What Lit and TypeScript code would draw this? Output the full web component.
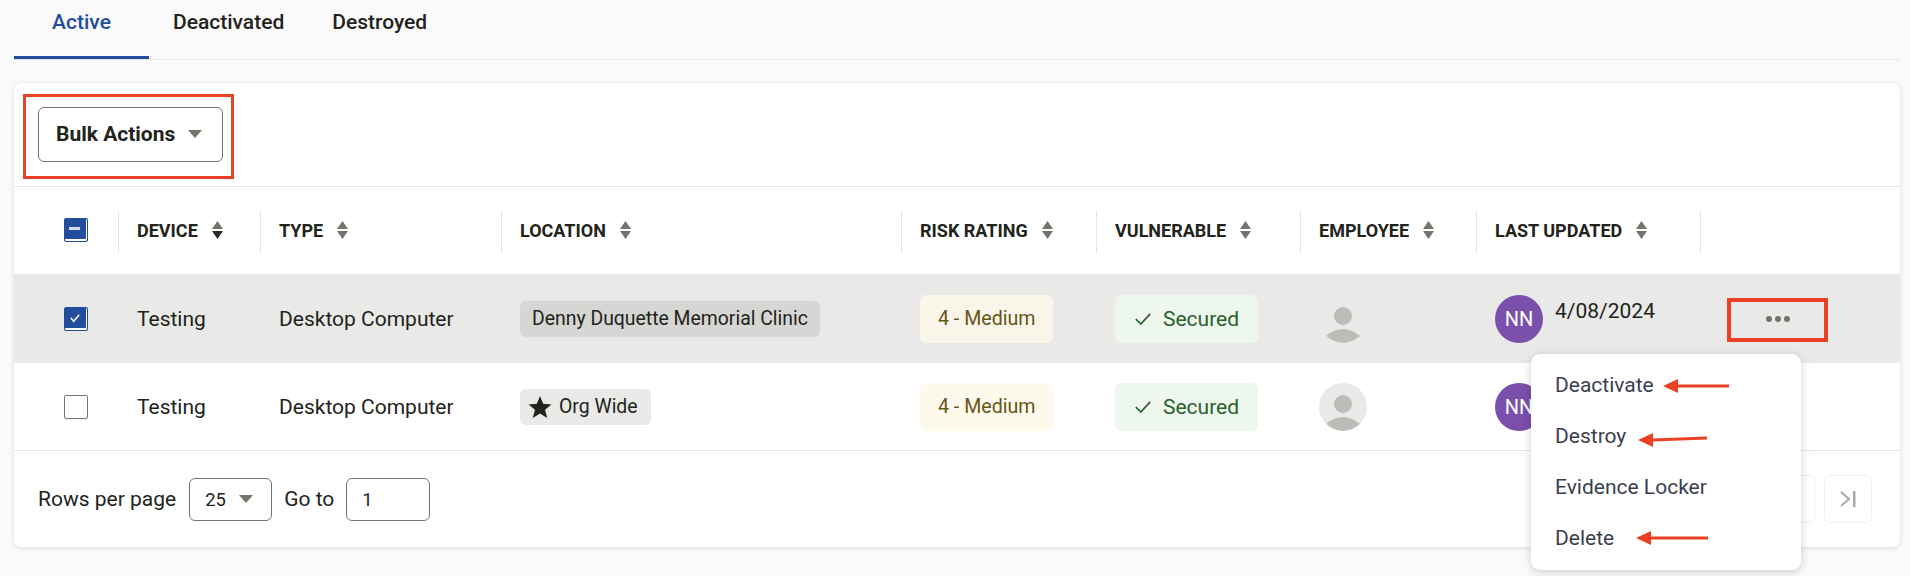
import { LitElement, html, css, svg } from "lit";
import { customElement } from "lit/decorators.js";

const sort = (down = false) => html`<svg class="sort" viewBox="0 0 11 18" width="11" height="18">
  <path d="M5.5 0 L11 8 H0Z" fill="#74746c"/>
  <path d="M5.5 18 L11 10 H0Z" fill=${down ? "#2b2b25" : "#74746c"}/></svg>`;

const caret = html`<svg class="caret" viewBox="0 0 14 8" width="14" height="8"><path d="M0 0H14L7 8Z" fill="#74746c"/></svg>`;
const person = svg`<circle cx="24" cy="21" r="9" fill="#bcbcb8"/><path d="M7 41 Q24 27 41 41 Q24 55 7 41Z" fill="#bcbcb8"/>`;
const star = html`<svg viewBox="0 0 24 24" width="24" height="24"><path d="M12 1 L15.2 8.8 L23.5 9.4 L17 14.8 L19.2 23 L12 18.6 L4.8 23 L7 14.8 L.5 9.4 L8.8 8.8Z" fill="#22231b"/></svg>`;
const check = html`<svg viewBox="0 0 16 12" width="16" height="12"><path d="M.8 6 L5.8 11 L15.2 .8" fill="none" stroke="#2a5f2e" stroke-width="1.7"/></svg>`;

const arrow = (x: number, y: number, w: number, tilt = 0) =>
  html`<svg class="arrow" style="left:${x}px;top:${y - 7}px" width=${w} height="14" viewBox="0 0 ${w} 14">
    <path d="M0 7 L15 0 V5.5 L${w} ${5.5 - tilt} V${8.5 - tilt} L15 8.5 V14Z" fill="#ea4125"/></svg>`;

interface Row { selected: boolean; location: string; star: boolean; }
const rows: Row[] = [
  { selected: true, location: "Denny Duquette Memorial Clinic", star: false },
  { selected: false, location: "Org Wide", star: true },
];
const heads = [
  ["DEVICE", true], ["TYPE", false], ["LOCATION", false], ["RISK RATING", false],
  ["VULNERABLE", false], ["EMPLOYEE", false], ["LAST UPDATED", false],
] as [string, boolean][];

@customElement("app-root")
export class AppRoot extends LitElement {
  static styles = css`
    :host { display: block; width: 1910px; height: 576px; overflow: hidden; background: #fafafa;
      font-family: Roboto, "Liberation Sans", sans-serif; font-size: 21px; color: #22231b; }
    .tabs { display: flex; height: 59px; margin: 0 10px 0 14px; border-bottom: 1px solid #e6e6e4; }
    .tab { height: 45px; display: flex; padding: 11px 24px 0; justify-content: center; font-weight: 500; font-size: 21px; line-height: 22px; white-space: nowrap; }
    .tab.active { box-sizing: content-box; width: 135px; padding: 11px 0 0; color: #234e9d; border-bottom: 3px solid #234e9d; }
    .card { position: relative; margin: 23px 10px 0 14px; height: 464px; background: #fff; border-radius: 7px; box-shadow: 0 1px 5px rgba(0,0,0,.13); }
    .bar { height: 104px; border-bottom: 1px solid #e6e6e4; padding: 24px 0 0 24px; box-sizing: border-box; }
    .bulk { width: 185px; height: 55px; box-sizing: border-box; border: 1px solid #74746c; border-radius: 6px; display: flex; align-items: center; padding: 0 0 2px 17px; gap: 13px; font-weight: 700; font-size: 21px; }
    .grid { display: grid; grid-template-columns: 104px 142px 241px 400px 195px 204px 176px 224px 200px; }
    .hd { height: 87px; padding-top: 2px; box-sizing: border-box; display: flex; align-items: center; }
    .hd > div { height: 42px; flex: 1; display: flex; align-items: center; border-left: 1px solid #e6e6e4; padding: 0 0 3px 18px; box-sizing: border-box; gap: 14px; font-weight: 700; font-size: 18px; white-space: nowrap; }
    .hd.first > div { border-left: 0; padding: 0 0 3px 50px; }
    .row { display: contents; }
    .cell { height: 88px; display: flex; align-items: center; padding-left: 19px; box-sizing: border-box; white-space: nowrap; }
    .r1 .cell { background: #e9e9e7; height: 89px; }
    .r2 .cell { border-bottom: 1px solid #e6e6e4; }
    .cell.chk { padding-left: 50px; }
    .box { width: 24px; height: 24px; box-sizing: border-box; border-radius: 2px; border: 1px solid #74746c; background: #fff; display: flex; align-items: center; justify-content: center; }
    .box.on { background: #234e9d; border-color: #234e9d; box-shadow: inset -1px -2px 0 #fff; }
    .loc { height: 36px; border-radius: 6px; display: flex; align-items: center; padding: 0 12px; gap: 7px; font-size: 19.4px; background: #e9e9e7; }
    .r1 .loc { background: #d6d6d4; }
    .r2 .loc { padding: 0 13px 0 8px; }
    .pill { height: 48px; border-radius: 6px; display: flex; align-items: center; padding: 0 18px; font-size: 19.6px; }
    .risk { color: #675519; background: #fefaeb; }
    .r1 .risk { background: #f9f6e9; }
    .sec { color: #2a5f2e; background: #edf7ee; gap: 12px; font-size: 21px; padding: 0 19px 0 20px; }
    .av { width: 48px; height: 48px; border-radius: 50%; flex: none; }
    .av.ghost { background: #e9e9e7; }
    .nn { background: #7b4fac; color: #fff; display: flex; align-items: center; justify-content: center; font-size: 20px; }
    .upd { display: flex; gap: 12px; align-items: flex-start; height: 48px; }
    .upd span { line-height: 32px; }
    .more { margin-left: 8px; width: 101px; height: 44px; box-sizing: border-box; display: flex; align-items: center; justify-content: center; gap: 3px; }
    .more i { width: 6px; height: 6px; border-radius: 50%; background: #74746c; }
    .foot { display: flex; align-items: center; height: 96px; padding: 0 24px; gap: 13px; position: relative; }
    .sel, .inp { height: 43px; box-sizing: border-box; border: 1px solid #74746c; border-radius: 6px; display: flex; align-items: center; font-size: 18.4px; }
    .sel { width: 83px; padding-left: 15px; gap: 13px; margin-right: -1px; }
    .inp { width: 84px; padding-left: 15px; margin-left: -1px; }
    .pager { margin-left: auto; margin-right: 4px; display: flex; gap: 9px; }
    .pg { width: 48px; height: 48px; box-sizing: border-box; border: 1px solid #f0f0ee; border-radius: 6px; display: flex; align-items: center; justify-content: center; }
    .mark { position: absolute; border: 3.5px solid #ea4125; box-sizing: border-box; pointer-events: none; }
    .mark.a { left: 9px; top: 11px; width: 211px; height: 85px; }
    .mark.b { left: 1713px; top: 215px; width: 101px; height: 44px; border-width: 4.5px; }
    .menu { position: absolute; left: 1517px; top: 271px; width: 270px; height: 216px; background: #fff; border-radius: 9px; box-shadow: 0 2px 10px rgba(0,0,0,.18); padding: 5px 24px; box-sizing: border-box; display: flex; flex-direction: column; color: #3a3f50; font-size: 21px; }
    .menu div { height: 51px; display: flex; align-items: center; flex: none; }
    .arrow { position: absolute; }
  `;

  render() {
    return html`
      <div class="tabs">
        <div class="tab active">Active</div>
        <div class="tab">Deactivated</div>
        <div class="tab">Destroyed</div>
      </div>
      <div class="card">
        <div class="bar"><div class="bulk">Bulk Actions ${caret}</div></div>
        <div class="grid">
          <div class="hd first"><div><div class="box on"><svg width="12" height="4" style="margin:-2px 2px 0 0"><rect width="11" height="3" fill="#d6dced"/></svg></div></div></div>
          ${heads.map(([t, d]) => html`<div class="hd"><div>${t} ${sort(d)}</div></div>`)}
          <div class="hd"><div></div></div>
          ${rows.map((r) => html`<div class="row ${r.selected ? "r1" : "r2"}">
            <div class="cell chk"><div class="box ${r.selected ? "on" : ""}">
              ${r.selected ? html`<svg viewBox="0 0 14 12" width="12" height="10" style="margin:-2px 2px 0 0"><path d="M2 6 L5.5 10 L12 2" fill="none" stroke="#fff" stroke-width="1.8"/></svg>` : ""}
            </div></div>
            <div class="cell">Testing</div>
            <div class="cell">Desktop Computer</div>
            <div class="cell"><div class="loc">${r.star ? star : ""}${r.location}</div></div>
            <div class="cell"><div class="pill risk">4 - Medium</div></div>
            <div class="cell"><div class="pill sec">${check}Secured</div></div>
            <div class="cell"><svg class="av ${r.selected ? "" : "ghost"}" viewBox="0 0 48 48">${person}</svg></div>
            <div class="cell"><div class="upd"><div class="av nn">NN</div>${r.selected ? html`<span>4/08/2024</span>` : ""}</div></div>
            <div class="cell">${r.selected ? html`<div class="more"><i></i><i></i><i></i></div>` : ""}</div>
          </div>`)}
        </div>
        <div class="foot">
          <span>Rows per page</span>
          <div class="sel">25 ${caret}</div>
          <span>Go to</span>
          <div class="inp">1</div>
          <div class="pager">
            <div class="pg"><svg viewBox="0 0 12 20" width="12" height="20"><path d="M2 3 L10 10 L2 17" fill="none" stroke="#a9a9a5" stroke-width="2"/></svg></div>
            <div class="pg"><svg viewBox="0 0 18 20" width="18" height="20"><path d="M2 3 L10 10 L2 17" fill="none" stroke="#a9a9a5" stroke-width="2"/><rect x="14" y="2" width="2.5" height="16" fill="#a9a9a5"/></svg></div>
          </div>
        </div>
        <div class="mark a"></div>
        <div class="mark b"></div>
        <div class="menu"><div>Deactivate</div><div>Destroy</div><div>Evidence Locker</div><div>Delete</div></div>
        ${arrow(1649, 303, 66)}
        ${arrow(1624, 357, 69, 2)}
        ${arrow(1622, 455, 72)}
      </div>`;
  }
}
